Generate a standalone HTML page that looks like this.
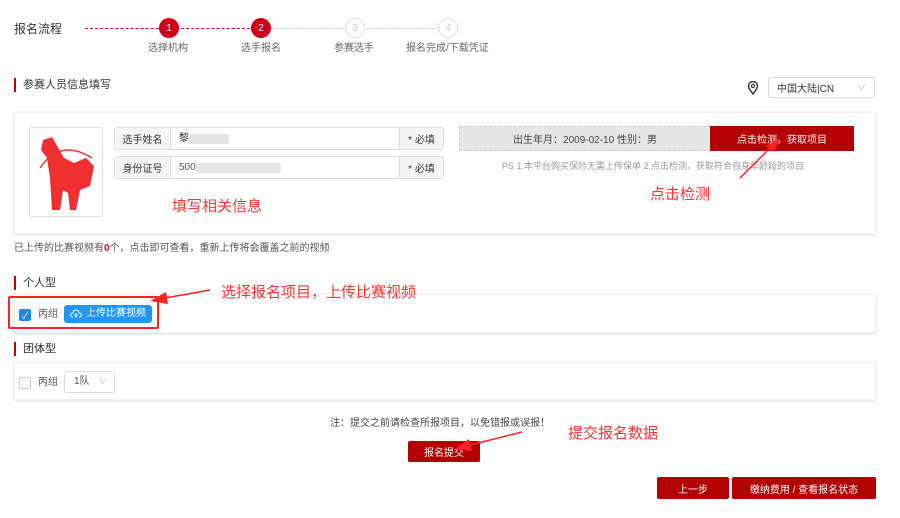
<!DOCTYPE html>
<html><head><meta charset="utf-8"><style>
*{margin:0;padding:0;box-sizing:border-box}
body{width:900px;height:518px;background:#fff;position:relative;overflow:hidden;font-family:"Liberation Sans","Noto Sans CJK SC",sans-serif;color:#333}
.a{position:absolute}
.t{white-space:nowrap;line-height:1.2}
.circ{position:absolute;width:20px;height:20px;border-radius:50%;font-size:10px;display:flex;align-items:center;justify-content:center}
.red{background:#d0021b;color:#fff}
.gray{border:1px solid #ddd;color:#ccc;background:#fff}
.bar{position:absolute;left:14px;width:2px;background:#c00}
.card{position:absolute;left:14px;width:862px;background:#fff;box-shadow:0 1px 3px rgba(0,0,0,.15);border:1px solid #f0f0f0}
.btn{position:absolute;background:#b30000;color:#fff;font-size:10px;border-radius:2px;display:flex;align-items:center;justify-content:center;white-space:nowrap}
.ann{position:absolute;color:#ff3333;font-size:15px;white-space:nowrap;line-height:1.2}
.fx{display:flex;align-items:center}
</style></head><body>
<div class="a t" style="left:14px;top:22px;font-size:12px;color:#333">报名流程</div>
<div class="a" style="left:85px;top:28px;width:175px;border-top:1px dashed #d0021b"></div>
<div class="a" style="left:270px;top:28px;width:175px;border-top:1px dashed #ccc"></div>
<div class="circ red" style="left:159px;top:18px">1</div>
<div class="circ red" style="left:251px;top:18px">2</div>
<div class="circ gray" style="left:345px;top:18px">3</div>
<div class="circ gray" style="left:438px;top:18px">4</div>
<div class="a t" style="left:148px;top:43px;font-size:10px;color:#666">选择机构</div>
<div class="a t" style="left:241px;top:43px;font-size:10px;color:#666">选手报名</div>
<div class="a t" style="left:334px;top:43px;font-size:10px;color:#666">参赛选手</div>
<div class="a t" style="left:406px;top:43px;font-size:10px;color:#666">报名完成/下载凭证</div>

<div class="bar" style="top:78px;height:14px"></div>
<div class="a t" style="left:23px;top:79px;font-size:11px">参赛人员信息填写</div>
<svg class="a" style="left:747px;top:81px" width="12" height="14" viewBox="0 0 12 14"><path d="M6 13C3 9 1.5 7 1.5 5A4.5 4.5 0 0 1 10.5 5C10.5 7 9 9 6 13Z" fill="none" stroke="#333" stroke-width="1.4"/><circle cx="6" cy="5" r="1.6" fill="none" stroke="#333" stroke-width="1.2"/></svg>
<div class="a fx" style="left:768px;top:77px;width:107px;height:21px;border:1px solid #ddd;border-radius:2px;font-size:10px;padding-left:8px">中国大陆|CN<span style="position:absolute;right:8px;color:#bbb;font-size:9px">∨</span></div>

<div class="card" style="top:112px;height:122px"></div>
<div class="a" style="left:29px;top:127px;width:74px;height:90px;border:1px solid #ddd;border-radius:3px;overflow:hidden">
<svg width="74" height="90" viewBox="0 0 74 90"><path d="M10 40Q30 10 62 30" fill="none" stroke="#e33" stroke-width="1.5"/><path d="M13 12L22 9 34 30 44 35 56 30 64 38 60 58 50 62 46 82 40 82 38 65 33 62 30 82 22 82 20 50 17 30 11 22Z" fill="#f03030"/></svg></div>
<div class="a" style="left:114px;top:127px;width:330px;height:23px;border:1px solid #ddd;border-radius:3px;font-size:10px"><div class="a fx" style="left:0;top:0;width:56px;height:21px;background:#f5f5f5;border-right:1px solid #ddd;justify-content:center">选手姓名</div><div class="a fx t" style="left:64px;height:21px">黎<span style="display:inline-block;width:40px;height:10px;background:#e4e4e4"></span></div><div class="a fx" style="right:0;top:0;width:44px;height:21px;background:#f5f5f5;border-left:1px solid #ddd;justify-content:center">* 必填</div></div>
<div class="a" style="left:114px;top:156px;width:330px;height:23px;border:1px solid #ddd;border-radius:3px;font-size:10px"><div class="a fx" style="left:0;top:0;width:56px;height:21px;background:#f5f5f5;border-right:1px solid #ddd;justify-content:center">身份证号</div><div class="a fx t" style="left:64px;height:21px;color:#555">500<span style="display:inline-block;width:85px;height:10px;background:#e6e6e6"></span></div><div class="a fx" style="right:0;top:0;width:44px;height:21px;background:#f5f5f5;border-left:1px solid #ddd;justify-content:center">* 必填</div></div>
<div class="a fx" style="left:459px;top:126px;width:252px;height:25px;background:#e6e6e6;border:1px dashed #ccc;font-size:10px;justify-content:center;color:#444">出生年月：2009-02-10 性别：男</div>
<div class="btn" style="left:710px;top:126px;width:144px;height:25px;border-radius:0">点击检测，获取项目</div>
<div class="a t" style="left:502px;top:161px;font-size:9px;color:#999">PS 1.本平台购买保险无需上传保单 2.点击检测，获取符合自身年龄段的项目</div>
<div class="ann" style="left:172px;top:198px">填写相关信息</div>
<div class="ann" style="left:650px;top:186px">点击检测</div>
<div class="a t" style="left:14px;top:243px;font-size:10px;color:#555">已上传的比赛视频有<b style="color:#e00">0</b>个，点击即可查看，重新上传将会覆盖之前的视频</div>

<div class="bar" style="top:276px;height:14px"></div>
<div class="a t" style="left:23px;top:277px;font-size:11px">个人型</div>
<div class="card" style="top:294px;height:39px"></div>
<div class="a fx" style="left:19px;top:309px;width:12px;height:12px;background:#1e88e5;border-radius:2px;color:#fff;font-size:9px;justify-content:center">✓</div>
<div class="a t" style="left:38px;top:309px;font-size:10px;color:#555">丙组</div>
<div class="a fx t" style="left:64px;top:305px;width:88px;height:18px;background:#2196f3;border-radius:3px;color:#fff;font-size:10px;padding-left:22px">上传比赛视频</div>
<svg class="a" style="left:70px;top:309px" width="12" height="10" viewBox="0 0 12 10"><path d="M3 8H2.5A2 2 0 0 1 3 4 3 3 0 0 1 9 4 2 2 0 0 1 9.5 8H9M6 9V5M4.5 6.5L6 5 7.5 6.5" fill="none" stroke="#fff" stroke-width="1"/></svg>
<div class="a" style="left:8px;top:296px;width:151px;height:33px;border:2px solid #f22;border-radius:2px"></div>
<div class="ann" style="left:221px;top:284px">选择报名项目，上传比赛视频</div>

<div class="bar" style="top:342px;height:14px"></div>
<div class="a t" style="left:23px;top:343px;font-size:11px">团体型</div>
<div class="card" style="top:362px;height:38px"></div>
<div class="a" style="left:19px;top:377px;width:12px;height:12px;border:1px solid #ccc;border-radius:2px"></div>
<div class="a t" style="left:38px;top:377px;font-size:10px;color:#555">丙组</div>
<div class="a fx t" style="left:64px;top:371px;width:51px;height:22px;border:1px solid #ddd;border-radius:3px;font-size:10px;padding-left:9px;color:#555">1队<span style="color:#bbb;margin-left:9px;font-size:8px">∨</span></div>

<div class="a t" style="left:330px;top:418px;font-size:10px;color:#444">注：提交之前请检查所报项目，以免错报或误报！</div>
<div class="ann" style="left:568px;top:425px">提交报名数据</div>
<div class="btn" style="left:408px;top:441px;width:72px;height:21px">报名提交</div>
<div class="btn" style="left:657px;top:477px;width:72px;height:22px">上一步</div>
<div class="btn" style="left:732px;top:477px;width:144px;height:22px">缴纳费用 / 查看报名状态</div>

<svg class="a" style="left:0;top:0" width="900" height="518">
<g fill="#f22" stroke="#f22">
<line x1="740" y1="178" x2="772" y2="146" stroke-width="1.5"/><polygon points="780,138 766,146 774,152" stroke="none"/>
<line x1="210" y1="290" x2="165" y2="298" stroke-width="1.5"/><polygon points="150,301 166,292 168,304" stroke="none"/>
<line x1="522" y1="432" x2="470" y2="445" stroke-width="1.5"/><polygon points="455,449 469,439 472,451" stroke="none"/>
</g></svg>
</body></html>
